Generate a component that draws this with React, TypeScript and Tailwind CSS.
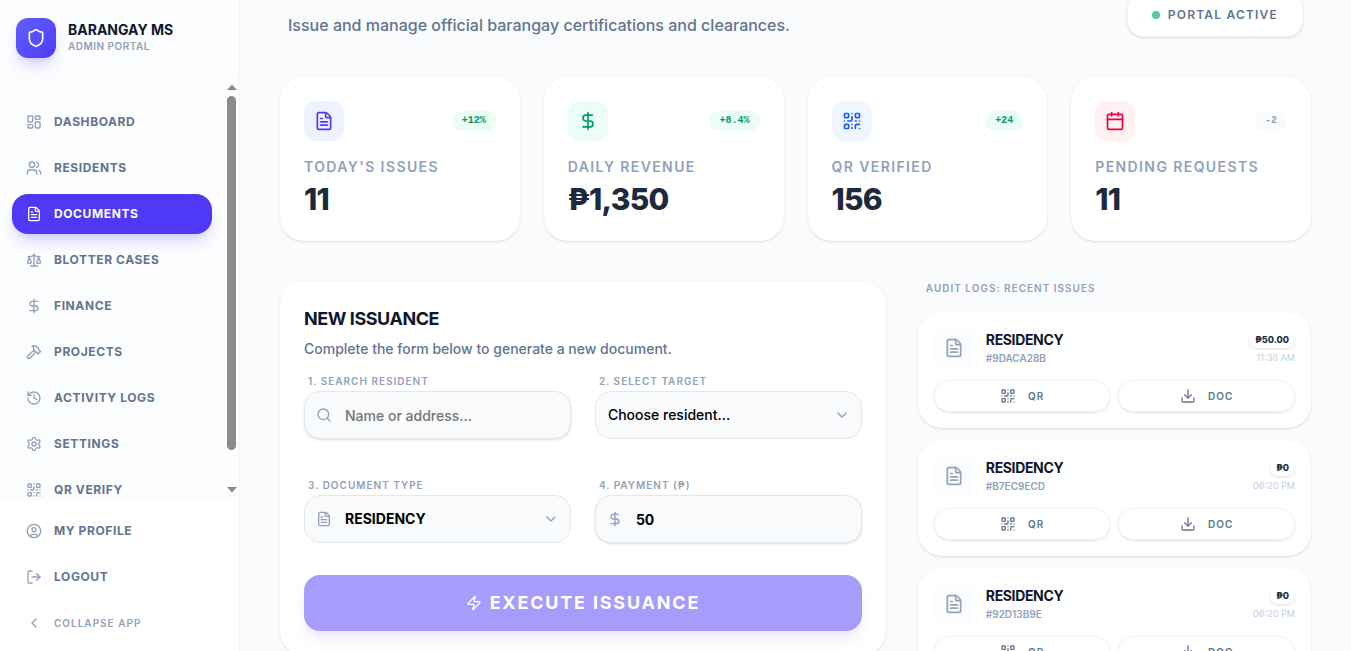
import type { ReactNode } from "react";
import {
  Calendar,
  ChevronDown,
  ChevronLeft,
  CircleUser,
  DollarSign,
  Download,
  FileText,
  Hammer,
  History,
  LayoutDashboard,
  LogOut,
  QrCode,
  Scale,
  Search,
  Settings,
  Shield,
  Users,
  Zap,
  type LucideIcon,
} from "lucide-react";

type NavEntry = { label: string; icon: LucideIcon; active?: boolean };

const navItems: NavEntry[] = [
  { label: "Dashboard", icon: LayoutDashboard },
  { label: "Residents", icon: Users },
  { label: "Documents", icon: FileText, active: true },
  { label: "Blotter Cases", icon: Scale },
  { label: "Finance", icon: DollarSign },
  { label: "Projects", icon: Hammer },
  { label: "Activity Logs", icon: History },
  { label: "Settings", icon: Settings },
  { label: "QR Verify", icon: QrCode },
];

const accountItems: NavEntry[] = [
  { label: "My Profile", icon: CircleUser },
  { label: "Logout", icon: LogOut },
];

const stats = [
  { label: "Today's Issues", value: "11", change: "+12%", icon: FileText, tone: "bg-indigo-50 text-indigo-600", badge: "bg-emerald-50 text-emerald-600" },
  { label: "Daily Revenue", value: "₱1,350", change: "+8.4%", icon: DollarSign, tone: "bg-emerald-50 text-emerald-600", badge: "bg-emerald-50 text-emerald-600" },
  { label: "QR Verified", value: "156", change: "+24", icon: QrCode, tone: "bg-blue-50 text-blue-600", badge: "bg-emerald-50 text-emerald-600" },
  { label: "Pending Requests", value: "11", change: "-2", icon: Calendar, tone: "bg-rose-50 text-rose-600", badge: "bg-slate-50 text-slate-400" },
];

const logs = [
  { id: "#9DACA28B", type: "Residency", amount: "₱50.00", time: "11:38 AM" },
  { id: "#B7EC9ECD", type: "Residency", amount: "₱0", time: "06:20 PM" },
  { id: "#92D13B9E", type: "Residency", amount: "₱0", time: "06:20 PM" },
];

function NavLink({ item }: { item: NavEntry }) {
  const Icon = item.icon;
  return (
    <a
      href="#"
      className={
        item.active
          ? "flex h-10 shrink-0 items-center gap-3 rounded-2xl bg-indigo-600 px-3.5 text-xs font-bold uppercase tracking-wider text-white shadow-lg shadow-indigo-600/20"
          : "flex h-10 shrink-0 items-center gap-3 rounded-2xl px-3.5 text-xs font-bold uppercase tracking-wider text-slate-500"
      }
    >
      <Icon size={16} className={item.active ? "text-white" : "text-slate-400"} />
      {item.label}
    </a>
  );
}

function Sidebar() {
  return (
    <aside className="flex w-60 shrink-0 flex-col border-r border-slate-100 bg-[#fcfdfe]">
      <div className="flex shrink-0 items-center gap-3 border-b border-slate-100/60 px-4 pt-[18px] pb-[19px]">
        <div className="flex size-10 items-center justify-center rounded-xl bg-gradient-to-br from-indigo-500 to-indigo-600 text-white shadow-lg shadow-indigo-600/20">
          <Shield size={20} />
        </div>
        <div className="pb-1">
          <p className="text-sm font-bold text-slate-900">BARANGAY MS</p>
          <p className="text-[10px] leading-3 font-semibold tracking-wider text-slate-400">ADMIN PORTAL</p>
        </div>
      </div>

      <div className="flex min-h-0 flex-1">
        <nav className="flex min-w-0 flex-1 flex-col gap-1.5 overflow-hidden px-3 pt-6">
          {navItems.map((item) => (
            <NavLink key={item.label} item={item} />
          ))}
        </nav>
        <div className="flex w-[15px] flex-col items-center gap-1.5 py-1.5 text-[#8b8b8b]" aria-hidden>
          <svg width="10" height="6" viewBox="0 0 10 6" fill="currentColor" className="shrink-0">
            <path d="M5 0.5 10 6H0Z" />
          </svg>
          <div className="h-[354px] w-[9px] rounded-full bg-[#8b8b8b]" />
          <svg width="10" height="6" viewBox="0 0 10 6" fill="currentColor" className="mt-auto shrink-0">
            <path d="M0 0h10L5 5.5Z" />
          </svg>
        </div>
      </div>

      <div className="flex shrink-0 flex-col gap-1.5 border-t border-slate-100/60 bg-white px-3 pt-[11px] pb-2">
        {accountItems.map((item) => (
          <NavLink key={item.label} item={item} />
        ))}
        <button className="flex h-10 items-center gap-3 px-3.5 text-[10px] font-semibold tracking-widest text-slate-400">
          <ChevronLeft size={16} />
          COLLAPSE APP
        </button>
      </div>
    </aside>
  );
}

function StatCard({ stat }: { stat: (typeof stats)[number] }) {
  const Icon = stat.icon;
  return (
    <div className="rounded-3xl bg-white p-6 shadow-sm">
      <div className="flex items-center justify-between">
        <div className={`flex size-10 items-center justify-center rounded-xl ${stat.tone}`}>
          <Icon size={20} />
        </div>
        <span className={`rounded-full px-2.5 py-0.5 font-['Liberation_Mono',monospace] text-[10px] leading-4 font-bold ${stat.badge}`}>
          {stat.change}
        </span>
      </div>
      <p className="mt-4 text-sm font-semibold tracking-widest text-slate-400 uppercase">{stat.label}</p>
      <p className="mt-1 text-3xl font-extrabold tracking-tight text-slate-800">{stat.value}</p>
    </div>
  );
}

function Field({ id, label, children }: { id: string; label: string; children: ReactNode }) {
  return (
    <div>
      <label htmlFor={id} className="mb-0.5 block px-1 text-[10px] leading-4 font-semibold tracking-widest text-slate-400">
        {label}
      </label>
      <div className="relative">{children}</div>
    </div>
  );
}

function IssuanceForm() {
  return (
    <form className="col-span-3 self-start rounded-3xl bg-white p-6 shadow-sm">
      <h2 className="text-lg font-bold tracking-tight text-slate-900">NEW ISSUANCE</h2>
      <p className="mt-1.5 text-sm font-medium text-slate-500">Complete the form below to generate a new document.</p>

      <div className="mt-3.5 grid grid-cols-2 gap-x-6 gap-y-[38px]">
        <Field id="search" label="1. SEARCH RESIDENT">
          <Search size={16} className="absolute top-4 left-3 text-slate-400" />
          <input
            id="search"
            placeholder="Name or address..."
            className="h-12 w-full rounded-2xl border border-slate-200 bg-slate-50 pr-3 pl-10 text-sm font-medium shadow-sm placeholder:text-[#757575]"
          />
        </Field>
        <Field id="target" label="2. SELECT TARGET">
          <select
            id="target"
            className="h-12 w-full appearance-none rounded-2xl border border-slate-200 bg-slate-50 px-3 text-sm font-medium text-black"
          >
            <option>Choose resident...</option>
          </select>
          <ChevronDown size={16} className="absolute top-4 right-3 text-slate-400" />
        </Field>
        <Field id="type" label="3. DOCUMENT TYPE">
          <FileText size={16} className="absolute top-4 left-3 text-slate-400" />
          <select
            id="type"
            className="h-12 w-full appearance-none rounded-2xl border border-slate-200 bg-slate-50 px-10 text-sm font-bold text-black"
          >
            <option>RESIDENCY</option>
          </select>
          <ChevronDown size={16} className="absolute top-4 right-3 text-slate-400" />
        </Field>
        <Field id="payment" label="4. PAYMENT (₱)">
          <DollarSign size={16} className="absolute top-4 left-3 text-slate-400" />
          <input
            id="payment"
            defaultValue="50"
            className="h-12 w-full rounded-2xl border border-slate-200 bg-slate-50 pr-3 pl-10 text-sm font-bold text-black shadow-sm"
          />
        </Field>
      </div>

      <button
        type="button"
        className="mt-8 flex h-14 w-full items-center justify-center gap-2 rounded-2xl bg-[#a79bfb] text-lg font-bold tracking-widest text-white shadow-lg shadow-indigo-600/10"
      >
        <Zap size={16} />
        EXECUTE ISSUANCE
      </button>
    </form>
  );
}

function LogCard({ log }: { log: (typeof logs)[number] }) {
  return (
    <li className="rounded-3xl bg-white p-4 shadow-sm">
      <div className="flex items-center gap-3">
        <div className="flex size-10 items-center justify-center rounded-xl bg-slate-50/60 text-slate-400">
          <FileText size={20} />
        </div>
        <div className="flex-1">
          <p className="text-sm font-bold tracking-tight text-slate-900 uppercase">{log.type}</p>
          <p className="text-[10px] leading-4 font-semibold text-slate-400">{log.id}</p>
        </div>
        <div className="flex flex-col items-end gap-1">
          <span className="rounded-full px-1.5 text-[9px] leading-4 font-extrabold text-slate-800 shadow-sm">{log.amount}</span>
          <span className="text-[9px] leading-3 font-medium text-slate-300">{log.time}</span>
        </div>
      </div>
      <div className="mt-3 grid grid-cols-2 gap-2">
        <button className="flex h-8 items-center justify-center gap-3 rounded-2xl border border-slate-100 text-[10px] font-semibold tracking-widest text-slate-500 shadow-sm">
          <QrCode size={16} />
          QR
        </button>
        <button className="flex h-8 items-center justify-center gap-3 rounded-2xl border border-slate-100 text-[10px] font-semibold tracking-widest text-slate-500 shadow-sm">
          <Download size={16} />
          DOC
        </button>
      </div>
    </li>
  );
}

export default function App() {
  return (
    <div className="flex h-screen overflow-hidden bg-[#fafbfd] font-['Inter',sans-serif]">
      <Sidebar />
      <main className="min-w-0 flex-1 overflow-hidden px-10">
        <header className="-mt-2 flex items-end justify-between px-2">
          <p className="text-base font-medium text-slate-500">
            Issue and manage official barangay certifications and clearances.
          </p>
          <div className="flex h-[45px] items-center gap-2 rounded-2xl border border-slate-100 bg-white px-6 text-xs font-semibold tracking-widest text-slate-500 shadow-sm">
            <span className="size-2 rounded-full bg-[#52cd9d]" />
            PORTAL ACTIVE
          </div>
        </header>

        <section className="mt-10 grid grid-cols-4 gap-6">
          {stats.map((stat) => (
            <StatCard key={stat.label} stat={stat} />
          ))}
        </section>

        <div className="mt-10 grid grid-cols-5 gap-8">
          <IssuanceForm />
          <section className="col-span-2">
            <h3 className="px-2 text-[10px] leading-[15px] font-semibold tracking-widest text-slate-400">
              AUDIT LOGS: RECENT ISSUES
            </h3>
            <ul className="mt-4 flex flex-col gap-3">
              {logs.map((log) => (
                <LogCard key={log.id} log={log} />
              ))}
            </ul>
          </section>
        </div>
      </main>
    </div>
  );
}
